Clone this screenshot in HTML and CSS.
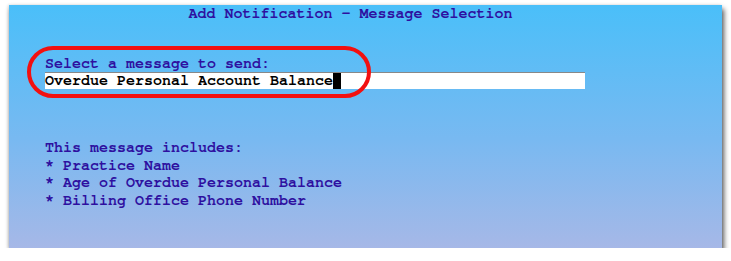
FILE: index.html
```html
<!DOCTYPE html>
<html lang="en">
<head>
    <meta charset="UTF-8">
    <title>Add Notification - Message Selection</title>
    <link rel="stylesheet" href="styles.css">
</head>
<body>
    <div class="screen">
        <div class="title">Add Notification - Message Selection</div>

        <div class="select-block">
            <div class="label">Select a message to send:</div>
            <div class="field">
                <span class="value">Overdue Personal Account Balance</span><span class="cursor"></span>
            </div>
            <div class="highlight"></div>
        </div>

        <div class="includes">
            <div class="line">This message includes:</div>
            <div class="line">* Practice Name</div>
            <div class="line">* Age of Overdue Personal Balance</div>
            <div class="line">* Billing Office Phone Number</div>
        </div>
    </div>
</body>
</html>
```

FILE: styles.css
```css
body {
    margin: 0;
    background: #fff;
    font-family: "Nimbus Mono PS", "Nimbus Mono L", "FreeMono", "Courier", "Liberation Mono", monospace;
}
.screen {
    margin: 5px 9px 0 9px;
    height: 243px;
    background: linear-gradient(to bottom, #4abff9 0%, #78b9f1 55%, #a6b8e7 100%);
    box-shadow: 2px 4px 5px rgba(0, 0, 0, 0.65), -1px 0 3px rgba(0, 0, 0, 0.15);
    color: #2e10a0;
    font-size: 15px;
    font-weight: bold;
    padding-left: 36px;
    box-sizing: border-box;
}
.title {
    text-align: center;
    padding-right: 66px;
    line-height: 17px;
}
.select-block {
    position: relative;
    margin-top: 33px;
}
.label {
    line-height: 17px;
}
.field {
    display: flex;
    align-items: center;
    width: 540px;
    height: 17px;
    background: #fff;
    border-top: 1px solid #888;
    box-sizing: border-box;
    color: #000;
}
.value {
    line-height: 16px;
}
.cursor {
    width: 8px;
    height: 16px;
    background: #000;
}
.highlight {
    position: absolute;
    left: -18px;
    top: -9px;
    width: 344px;
    height: 52px;
    border: 4px solid #f21010;
    border-radius: 26px;
    box-sizing: border-box;
}
.includes {
    margin-top: 50px;
}
.line {
    line-height: 17.5px;
}
```
